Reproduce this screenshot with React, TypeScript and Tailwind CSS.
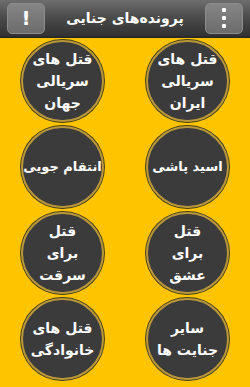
import React from 'react'

const items: string[][] = [
  ['قتل های', 'سریالی', 'ایران'],
  ['قتل های', 'سریالی', 'جهان'],
  ['اسید پاشی'],
  ['انتقام جویی'],
  ['قتل', 'برای', 'عشق'],
  ['قتل', 'برای', 'سرقت'],
  ['سایر', 'جنایت ها'],
  ['قتل های', 'خانوادگی'],
]

function Bubble({ lines }: { lines: string[] }) {
  const single = lines.length === 1
  return (
    <button
      className={
        'flex h-[82px] w-[83px] flex-col items-center justify-center whitespace-nowrap rounded-full border-2 border-[#b9983a] bg-[#3b3b3b] font-bold leading-[22px] text-white shadow-[0_0_0_1px_#4a3f1c] ' +
        (single ? 'text-[13px]' : 'text-[14px]')
      }
    >
      {lines.map((l, i) => (
        <span key={i}>{l}</span>
      ))}
    </button>
  )
}

export default function App() {
  return (
    <main className="h-[387px] w-[250px] overflow-hidden bg-[#fec400] font-['DejaVu_Sans',sans-serif]">
      <header className="flex h-[38px] items-center justify-between border-b-2 border-[#2a2a2a] bg-gradient-to-b from-[#6e6e6e] via-[#4a4a4a] to-[#323232] px-[7px]">
        <div className="flex h-[31px] w-[38px] items-center justify-center rounded-[5px] border border-[#8c8c8c] bg-gradient-to-b from-[#858585] to-[#6c6c6c]">
          <span className="text-[20px] font-bold leading-none text-white">!</span>
        </div>
        <h1 dir="rtl" className="text-[14px] font-bold text-white">پرونده‌های جنایی</h1>
        <div className="flex h-[31px] w-[38px] flex-col items-center justify-center gap-[4px] rounded-[5px] border border-[#8c8c8c] bg-gradient-to-b from-[#858585] to-[#6c6c6c]">
          <span className="h-[4px] w-[4px] rounded-[1px] bg-white" />
          <span className="h-[4px] w-[4px] rounded-[1px] bg-white" />
          <span className="h-[4px] w-[4px] rounded-[1px] bg-white" />
        </div>
      </header>

      <div dir="rtl" className="grid grid-cols-[125px_125px] justify-items-center gap-y-[4px] pt-[2px]">
        {items.map((lines, i) => (
          <Bubble key={i} lines={lines} />
        ))}
      </div>
    </main>
  )
}
